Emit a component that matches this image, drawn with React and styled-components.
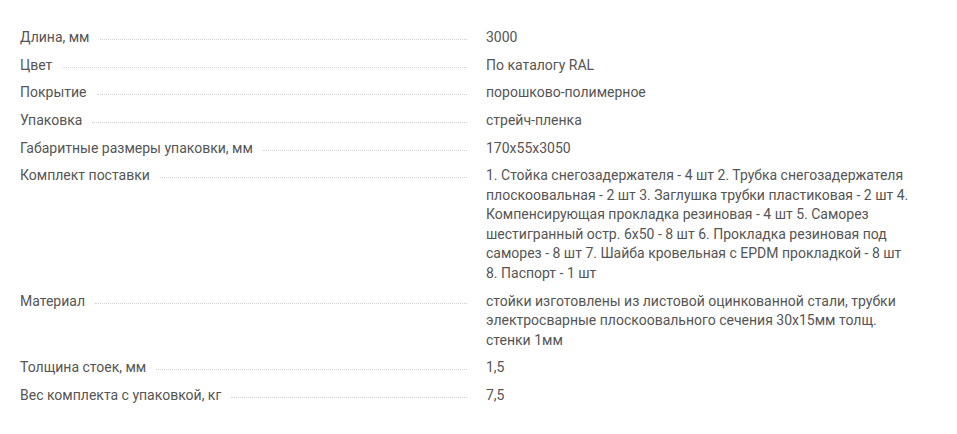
import React from "react"
import styled, { createGlobalStyle } from "styled-components"

const GlobalStyle = createGlobalStyle`
  body {
    margin: 0;
    background: #fff;
    font-family: Roboto, "Noto Sans", Arial, sans-serif;
  }
`

const specs = [
  ["Длина, мм", "3000"],
  ["Цвет", "По каталогу RAL"],
  ["Покрытие", "порошково-полимерное"],
  ["Упаковка", "стрейч-пленка"],
  ["Габаритные размеры упаковки, мм", "170x55x3050"],
  [
    "Комплект поставки",
    "1. Стойка снегозадержателя - 4 шт 2. Трубка снегозадержателя плоскоовальная - 2 шт 3. Заглушка трубки пластиковая - 2 шт 4. Компенсирующая прокладка резиновая - 4 шт 5. Саморез шестигранный остр. 6x50 - 8 шт 6. Прокладка резиновая под саморез - 8 шт 7. Шайба кровельная с EPDM прокладкой - 8 шт 8. Паспорт - 1 шт",
  ],
  [
    "Материал",
    "стойки изготовлены из листовой оцинкованной стали, трубки электросварные плоскоовального сечения 30x15мм толщ. стенки 1мм",
  ],
  ["Толщина стоек, мм", "1,5"],
  ["Вес комплекта с упаковкой, кг", "7,5"],
]

const SpecList = styled.dl`
  margin: 0;
  padding: 28px 24px 20px 20px;
  display: grid;
  grid-template-columns: 447px 430px;
  column-gap: 19px;
  row-gap: 8.2px;
  font-size: 14px;
  line-height: 19.5px;
  color: #555;
`

const Term = styled.dt`
  display: flex;
  align-items: flex-start;
  gap: 10px;
  margin: 0;
`

const Dots = styled.span`
  flex: 1;
  height: 11px;
  border-bottom: 1px dotted #cfcfcf;
`

const Value = styled.dd`
  margin: 0;
`

export default function App() {
  return (
    <>
      <GlobalStyle />
      <SpecList>
        {specs.map(([name, value]) => (
          <React.Fragment key={name}>
            <Term>
              <span>{name}</span>
              <Dots />
            </Term>
            <Value>{value}</Value>
          </React.Fragment>
        ))}
      </SpecList>
    </>
  )
}
